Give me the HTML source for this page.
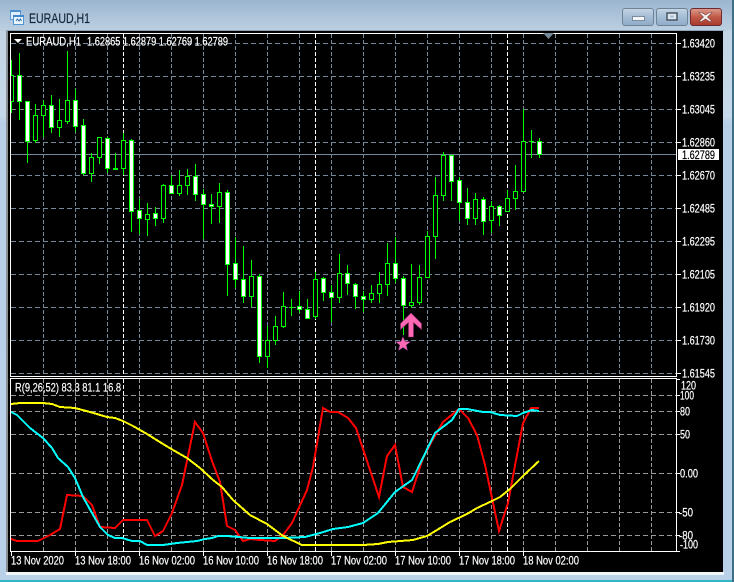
<!DOCTYPE html>
<html><head><meta charset="utf-8"><title>EURAUD,H1</title>
<style>
html,body{margin:0;padding:0;background:#b9d1e8;overflow:hidden}
svg{display:block}
text{font-family:"Liberation Sans",sans-serif;font-size:12px;fill:#fff;stroke:#fff;stroke-width:.2}
</style></head><body>
<svg width="734" height="582" viewBox="0 0 734 582" xmlns="http://www.w3.org/2000/svg">
<defs>
<linearGradient id="bg" x1="0" y1="0" x2="0" y2="1"><stop offset="0" stop-color="#9db8d2"/><stop offset=".055" stop-color="#c3d5e5"/><stop offset=".2" stop-color="#c6d9ea"/><stop offset=".21" stop-color="#b8d0e7"/><stop offset="1" stop-color="#b9d1e8"/></linearGradient>
<linearGradient id="t" x1="0" y1="0" x2="0" y2="1"><stop offset="0" stop-color="#9bb6d0"/><stop offset="1" stop-color="#bdd0e2"/></linearGradient>
<linearGradient id="b1" x1="0" y1="0" x2="0" y2="1"><stop offset="0" stop-color="#c6d5e5"/><stop offset=".5" stop-color="#a5bdd6"/><stop offset="1" stop-color="#8fabc8"/></linearGradient>
<linearGradient id="b2" x1="0" y1="0" x2="0" y2="1"><stop offset="0" stop-color="#dc9c90"/><stop offset=".5" stop-color="#c25a48"/><stop offset="1" stop-color="#a63a2c"/></linearGradient>
<clipPath id="c1"><rect x="11" y="34" width="665" height="342"/></clipPath>
<clipPath id="c2"><rect x="11" y="379" width="665" height="172"/></clipPath>
</defs>
<rect width="734" height="582" fill="url(#bg)"/>
<rect width="734" height="31" fill="url(#t)"/>
<rect x="0" y="580" width="734" height="2" fill="#2fb5c4"/>
<rect x="732" y="0" width="2" height="582" fill="#3f6f86"/>
<rect x="6" y="30" width="718" height="1" fill="#8ea3b8"/>
<rect x="6" y="31" width="2" height="544" fill="#8b8f94"/>
<rect x="6" y="572" width="718" height="3" fill="#f0f4f8"/>
<rect x="8" y="31" width="715" height="541" fill="#000"/>

<!-- title icon -->
<g shape-rendering="crispEdges">
<rect x="10.5" y="10.5" width="10" height="9" fill="#dfeefa" stroke="#5b9bd5"/>
<rect x="10" y="10" width="11" height="2" fill="#4c8fd0"/>
<rect x="13.5" y="15.5" width="10" height="9" fill="#eef6fd" stroke="#4f94d4"/>
<rect x="13" y="15" width="11" height="2" fill="#3f86cc"/>
</g>
<path d="M16 21l1.500-2 1.500 2 1.500-2 1 2" fill="none" stroke="#2f6fb0"/>
<text x="29" y="23" textLength="61" lengthAdjust="spacingAndGlyphs" style="font-size:14px;fill:#16263a;stroke:#16263a">EURAUD,H1</text>

<!-- buttons -->
<rect x="622.500" y="8.500" width="31" height="17" rx="2.500" fill="url(#b1)" stroke="#6f8397"/>
<rect x="632.500" y="16.500" width="12" height="4" fill="#f4f6f8" stroke="#5d6f82" stroke-width=".7"/>
<rect x="656.500" y="8.500" width="31" height="17" rx="2.500" fill="url(#b1)" stroke="#6f8397"/>
<rect x="667" y="13" width="10" height="7" fill="#dfe7ef" stroke="#3f4d5c" stroke-width="1.400"/>
<rect x="670" y="15.500" width="4" height="2" fill="#a9c0d8"/>
<rect x="690.500" y="8.500" width="31" height="17" rx="2.500" fill="url(#b2)" stroke="#6e2a2e"/>
<path d="M701.500 12.500l4 2.500 4-2.500h2.500l-4.500 4.500 4.500 4.500h-2.500l-4-2.500-4 2.500h-2.500l4.500-4.500-4.500-4.500z" fill="#f5f2f0" stroke="#7a4a44" stroke-width=".6"/>

<!-- upper panel grid -->
<g clip-path="url(#c1)" shape-rendering="crispEdges">
<path d="M43.500 34V376M75.500 34V376M107.500 34V376M139.500 34V376M171.500 34V376M203.500 34V376M235.500 34V376M267.500 34V376M299.500 34V376M331.500 34V376M363.500 34V376M395.500 34V376M427.500 34V376M459.500 34V376M491.500 34V376M523.500 34V376M555.500 34V376M587.500 34V376M619.500 34V376M651.500 34V376" stroke="#778899" stroke-dasharray="4 2" fill="none"/>
<path d="M11 43.500H676M11 76.500H676M11 109.500H676M11 142.500H676M11 175.500H676M11 208.500H676M11 241.500H676M11 274.500H676M11 307.500H676M11 340.500H676M11 373.500H676" stroke="#778899" stroke-dasharray="5 3" fill="none"/>
<path d="M123.500 34V376M315.500 34V376M507.500 34V376" stroke="#fff" stroke-dasharray="4 2" fill="none"/>
<rect x="11" y="154" width="665" height="1" fill="#778899"/>
<path fill="none" stroke="#00ff00" d="M11.500 60V113M19.500 53V120M27.500 101V163M35.500 104V143M43.500 100V137M51.500 95V133M59.500 99V137M67.500 51V124M75.500 89V132M83.500 119V175M91.500 153V182M99.500 137V164M107.500 137V173M115.500 153V168M123.500 133V175M131.500 139V232M139.500 199V234M147.500 203V236M155.500 207V226M163.500 184V223M171.500 175V194M179.500 170V196M187.500 169V195M195.500 164V201M203.500 189V239M211.500 194V224M219.500 183V223M227.500 190V296M235.500 237V288M243.500 246V303M251.500 260V307M259.500 274V363M267.500 326V368M275.500 316V345M283.500 292V328M291.500 299V316M299.500 291V313M307.500 299V318M315.500 272V319M323.500 277V301M331.500 285V322M339.500 254V303M347.500 265V295M355.500 283V309M363.500 291V312M371.500 285V303M379.500 272V303M387.500 243V296M395.500 237V283M403.500 276V335M411.500 264V308M419.500 265V305M427.500 231V277M435.500 177V259M443.500 152V201M451.500 155V201M459.500 177V221M467.500 188V225M475.500 193V225M483.500 197V235M491.500 201V233M499.500 205V226M507.500 190V212M515.500 165V210M523.500 109V191M531.500 130V158M539.500 138V158"/>
<path fill="#000" stroke="#00ff00" d="M9.500 75.500h4v26h-4zM33.500 115.500h4v25h-4zM41.500 105.500h4v10h-4zM57.500 120.500h4v7h-4zM65.500 100.500h4v21h-4zM89.500 157.500h4v16h-4zM97.500 137.500h4v20h-4zM121.500 140.500h4v28h-4zM145.500 214.500h4v5h-4zM161.500 185.500h4v33h-4zM177.500 185.500h4v8h-4zM185.500 176.500h4v9h-4zM217.500 192.500h4v14h-4zM249.500 276.500h4v20h-4zM265.500 340.500h4v16h-4zM273.500 326.500h4v14h-4zM281.500 306.500h4v20h-4zM313.500 279.500h4v37h-4zM337.500 273.500h4v24h-4zM369.500 293.500h4v6h-4zM377.500 284.500h4v9h-4zM385.500 263.500h4v21h-4zM409.500 302.500h4v3h-4zM417.500 277.500h4v25h-4zM425.500 236.500h4v41h-4zM433.500 195.500h4v41h-4zM441.500 155.500h4v40h-4zM473.500 199.500h4v19h-4zM489.500 206.500h4v14h-4zM505.500 198.500h4v13h-4zM513.500 191.500h4v7h-4zM521.500 141.500h4v50h-4z"/>
<path fill="#fff" stroke="#00ff00" d="M17.500 75.500h4v26h-4zM25.500 101.500h4v40h-4zM49.500 105.500h4v22h-4zM73.500 100.500h4v26h-4zM81.500 125.500h4v48h-4zM105.500 138.500h4v30h-4zM129.500 140.500h4v71h-4zM137.500 210.500h4v8h-4zM153.500 213.500h4v5h-4zM169.500 185.500h4v8h-4zM193.500 176.500h4v18h-4zM201.500 194.500h4v10h-4zM209.500 204.500h4v2h-4zM225.500 192.500h4v72h-4zM233.500 263.500h4v16h-4zM241.500 279.500h4v17h-4zM257.500 276.500h4v80h-4zM297.500 306.500h4v3h-4zM305.500 309.500h4v9h-4zM321.500 278.500h4v14h-4zM329.500 292.500h4v5h-4zM345.500 273.500h4v10h-4zM353.500 284.500h4v12h-4zM361.500 296.500h4v3h-4zM393.500 263.500h4v15h-4zM401.500 278.500h4v27h-4zM449.500 155.500h4v26h-4zM457.500 180.500h4v22h-4zM465.500 202.500h4v16h-4zM481.500 199.500h4v22h-4zM497.500 206.500h4v9h-4zM537.500 141.500h4v13h-4z"/>
<path fill="#00ff00" d="M113 168h5v2h-5zM289 307h5v1h-5zM529 141h5v1h-5z"/>
<path d="M411 313l10.500 10.500v6l-8-7V337h-5V322.500l-8 7v-6z" fill="#ff69b4" stroke="#8a2a6e" stroke-width=".6" shape-rendering="auto"/>
<path d="M403 336.500l2 4.900 5.500.3-4.300 3.400 1.400 5.400-4.600-3-4.600 3 1.400-5.400-4.300-3.400 5.500-.3z" fill="#ff69b4" stroke="#6a2a7e" stroke-width=".5" shape-rendering="auto"/>
</g>
<rect x="10.500" y="33.500" width="666" height="343" fill="none" stroke="#fff" shape-rendering="crispEdges"/>
<path d="M543 33h11l-5.500 6z" fill="#778899"/>

<!-- upper axis -->
<path d="M677 43.500h4M677 76.500h4M677 109.500h4M677 142.500h4M677 175.500h4M677 208.500h4M677 241.500h4M677 274.500h4M677 307.500h4M677 340.500h4M677 373.500h4" stroke="#fff" shape-rendering="crispEdges"/>
<text x="682" y="47.500" textLength="33" lengthAdjust="spacingAndGlyphs">1.63420</text>
<text x="682" y="80.500" textLength="33" lengthAdjust="spacingAndGlyphs">1.63235</text>
<text x="682" y="113.500" textLength="33" lengthAdjust="spacingAndGlyphs">1.63045</text>
<text x="682" y="146.500" textLength="33" lengthAdjust="spacingAndGlyphs">1.62860</text>
<text x="682" y="179.500" textLength="33" lengthAdjust="spacingAndGlyphs">1.62670</text>
<text x="682" y="212.500" textLength="33" lengthAdjust="spacingAndGlyphs">1.62485</text>
<text x="682" y="245.500" textLength="33" lengthAdjust="spacingAndGlyphs">1.62295</text>
<text x="682" y="278.500" textLength="33" lengthAdjust="spacingAndGlyphs">1.62105</text>
<text x="682" y="311.500" textLength="33" lengthAdjust="spacingAndGlyphs">1.61920</text>
<text x="682" y="344.500" textLength="33" lengthAdjust="spacingAndGlyphs">1.61730</text>
<text x="682" y="377.500" textLength="33" lengthAdjust="spacingAndGlyphs">1.61545</text>
<rect x="678" y="149" width="41" height="11" fill="#fff"/>
<text x="682" y="159" textLength="33" lengthAdjust="spacingAndGlyphs" style="fill:#000;stroke:#000">1.62789</text>

<!-- legend -->
<path d="M14 39h8l-4 4z" fill="#fff"/>
<text x="26" y="45.500" textLength="55" lengthAdjust="spacingAndGlyphs">EURAUD,H1</text>
<text x="87" y="45.500" textLength="141" lengthAdjust="spacingAndGlyphs">1.62865 1.62879 1.62769 1.62789</text>

<!-- lower panel -->
<g clip-path="url(#c2)">
<g shape-rendering="crispEdges" fill="none">
<path d="M43.500 379V551M75.500 379V551M107.500 379V551M139.500 379V551M171.500 379V551M203.500 379V551M235.500 379V551M267.500 379V551M299.500 379V551M331.500 379V551M363.500 379V551M395.500 379V551M427.500 379V551M459.500 379V551M491.500 379V551M523.500 379V551M555.500 379V551M587.500 379V551M619.500 379V551M651.500 379V551" stroke="#999" stroke-dasharray="4 2"/>
<path d="M11 395.500H676M11 411.500H676M11 434.500H676M11 473.500H676M11 512.500H676M11 535.500H676" stroke="#999" stroke-dasharray="5 3"/>
<path d="M123.500 379V551M315.500 379V551M507.500 379V551" stroke="#fff" stroke-dasharray="4 2"/>
</g>
<g shape-rendering="crispEdges" fill="none" stroke-width="2">
<polyline stroke="#ff0000" points="11,539 17,541 38,541 50,535 60,529 67,495 83,496 92,505 100,527 115,528 123,520 147,520 155,536 163,531 172,513 182,485 195,422 203,433 212,461 220,482 227,526 235,530 243,541 250,539 260,540 275,541 283,535 292,523 307,490 313,467 323,408 330,412 338,412 348,418 356,428 379,497 387,456 395,445 403,487 412,492 423,458 432,441 443,422 459,409 468,418 477,435 485,465 499,531 508,503 523,423 531,408 539,408"/>
<polyline stroke="#00ffff" points="11,412 17,415 30,428 43,438 52,448 58,458 68,467 75,478 83,497 92,513 100,527 108,535 115,538 122,538 132,541 140,541 147,545 163,545 177,543 197,541 205,539 212,538 218,536 227,536 250,538 283,538 305,537 320,533 333,529 348,527 363,523 378,513 395,492 412,480 418,468 435,433 452,420 459,409 467,409 483,412 490,412 500,415 517,416 523,413 532,410 539,411"/>
<polyline stroke="#ffff00" points="11,404 20,403 43,403 52,404 60,407 75,408 90,412 107,417 115,418 123,421 133,426 147,434 163,444 173,450 187,458 200,468 213,480 222,487 233,500 250,515 267,524 283,536 302,545 363,545 378,544 388,542 413,540 427,536 437,530 450,522 467,514 477,508 490,502 500,497 510,489 523,476 539,461"/>
</g>
</g>
<rect x="10.500" y="378.500" width="666" height="173" fill="none" stroke="#fff" shape-rendering="crispEdges"/>
<text x="15" y="391.500" textLength="106" lengthAdjust="spacingAndGlyphs">R(9,26,52) 83.3 81.1 16.8</text>

<!-- lower axis -->
<path d="M677 379.500h3M677 395.500h3M677 411.500h3M677 434.500h3M677 473.500h3M677 512.500h3M677 535.500h3M677 551.500h3" stroke="#fff" shape-rendering="crispEdges"/>
<text x="681" y="389.500" textLength="15" lengthAdjust="spacingAndGlyphs">120</text>
<text x="680" y="399.500" textLength="14" lengthAdjust="spacingAndGlyphs">100</text>
<text x="680" y="415.500" textLength="10" lengthAdjust="spacingAndGlyphs">80</text>
<text x="680" y="438.500" textLength="10" lengthAdjust="spacingAndGlyphs">50</text>
<text x="680" y="477.500" textLength="18" lengthAdjust="spacingAndGlyphs">0.00</text>
<text x="679" y="516.500" textLength="14" lengthAdjust="spacingAndGlyphs">-50</text>
<text x="679" y="539.500" textLength="14" lengthAdjust="spacingAndGlyphs">-80</text>
<text x="680" y="548.500" textLength="18" lengthAdjust="spacingAndGlyphs">-100</text>

<!-- time axis -->
<path d="M11.500 552v4M75.500 552v4M139.500 552v4M203.500 552v4M267.500 552v4M331.500 552v4M395.500 552v4M459.500 552v4M523.500 552v4" stroke="#fff" shape-rendering="crispEdges"/>
<text x="11" y="564.500" textLength="53" lengthAdjust="spacingAndGlyphs">13 Nov 2020</text>
<text x="75" y="564.500" textLength="56" lengthAdjust="spacingAndGlyphs">13 Nov 18:00</text>
<text x="139" y="564.500" textLength="56" lengthAdjust="spacingAndGlyphs">16 Nov 02:00</text>
<text x="203" y="564.500" textLength="56" lengthAdjust="spacingAndGlyphs">16 Nov 10:00</text>
<text x="267" y="564.500" textLength="56" lengthAdjust="spacingAndGlyphs">16 Nov 18:00</text>
<text x="331" y="564.500" textLength="56" lengthAdjust="spacingAndGlyphs">17 Nov 02:00</text>
<text x="395" y="564.500" textLength="56" lengthAdjust="spacingAndGlyphs">17 Nov 10:00</text>
<text x="459" y="564.500" textLength="56" lengthAdjust="spacingAndGlyphs">17 Nov 18:00</text>
<text x="523" y="564.500" textLength="56" lengthAdjust="spacingAndGlyphs">18 Nov 02:00</text>
</svg>
</body></html>
